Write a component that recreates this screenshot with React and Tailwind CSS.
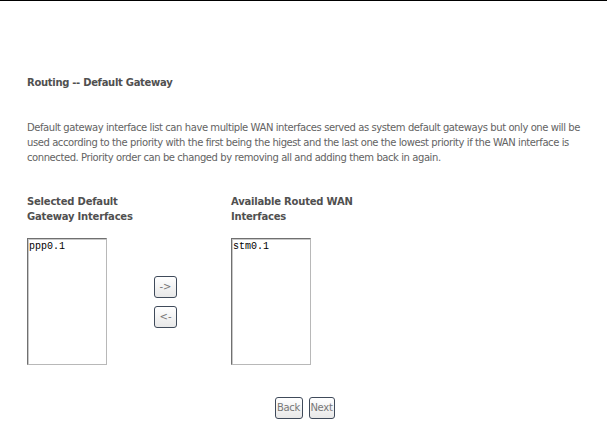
import React from "react";

const ListBox = ({ items }) => (
  <div className="w-[80px] h-[127px] bg-white border border-t-[#707070] border-l-[#707070] border-r-[#b8b8b8] border-b-[#b8b8b8] shadow-[inset_1px_1px_0_#c8c8c8]">
    {items.map((it) => (
      <div key={it} className="pl-[1px] pt-[1px] font-['Liberation_Mono',monospace] text-[10px] leading-[13px] text-black">
        {it}
      </div>
    ))}
  </div>
);

const SmallButton = ({ children, className = "" }) => (
  <button
    className={
      "h-[22px] p-0 rounded-[3px] border border-[#3f4a5a] bg-gradient-to-b from-white to-[#e8e8e8] text-[#777] text-[10px] leading-none font-['DejaVu_Sans',sans-serif] " +
      className
    }
  >
    {children}
  </button>
);

const App = () => {
  return (
    <div className="w-[607px] h-[423px] bg-white overflow-hidden font-['DejaVu_Sans',sans-serif]">
      <div className="h-[1px] bg-black"></div>

      <div className="pl-[27px]">
        {/* Title */}
        <h2 className="mt-[75px] text-[10px] leading-[14px] font-bold text-[#505050] tracking-[-0.3px]">
          Routing -- Default Gateway
        </h2>

        {/* Description */}
        <p className="mt-[30px] whitespace-nowrap text-[10px] leading-[15px] text-[#636363] tracking-[-0.42px]">
          Default gateway interface list can have multiple WAN interfaces served as system default gateways but only one will be
          <br />
          used according to the priority with the first being the higest and the last one the lowest priority if the WAN interface is
          <br />
          connected. Priority order can be changed by removing all and adding them back in again.
        </p>

        {/* Labels */}
        <div className="mt-[29px] flex text-[10px] leading-[15px] font-bold text-[#505050] tracking-[-0.2px]">
          <div className="w-[204px]">
            Selected Default
            <br />
            Gateway Interfaces
          </div>
          <div>
            Available Routed WAN
            <br />
            Interfaces
          </div>
        </div>

        {/* Lists */}
        <div className="mt-[14px] flex items-center">
          <ListBox items={["ppp0.1"]} />
          <div className="ml-[47px] flex flex-col gap-[8px]">
            <SmallButton className="w-[23px]">-&gt;</SmallButton>
            <SmallButton className="w-[23px]">&lt;-</SmallButton>
          </div>
          <div className="ml-[54px]">
            <ListBox items={["stm0.1"]} />
          </div>
        </div>
      </div>

      {/* Footer buttons */}
      <div className="mt-[32px] flex justify-center gap-[6px] pl-[2px]">
        <SmallButton className="w-[28px] h-[21px] tracking-[-0.3px]">Back</SmallButton>
        <SmallButton className="w-[26px] h-[21px] tracking-[-0.3px]">Next</SmallButton>
      </div>
    </div>
  );
};

export default App;
